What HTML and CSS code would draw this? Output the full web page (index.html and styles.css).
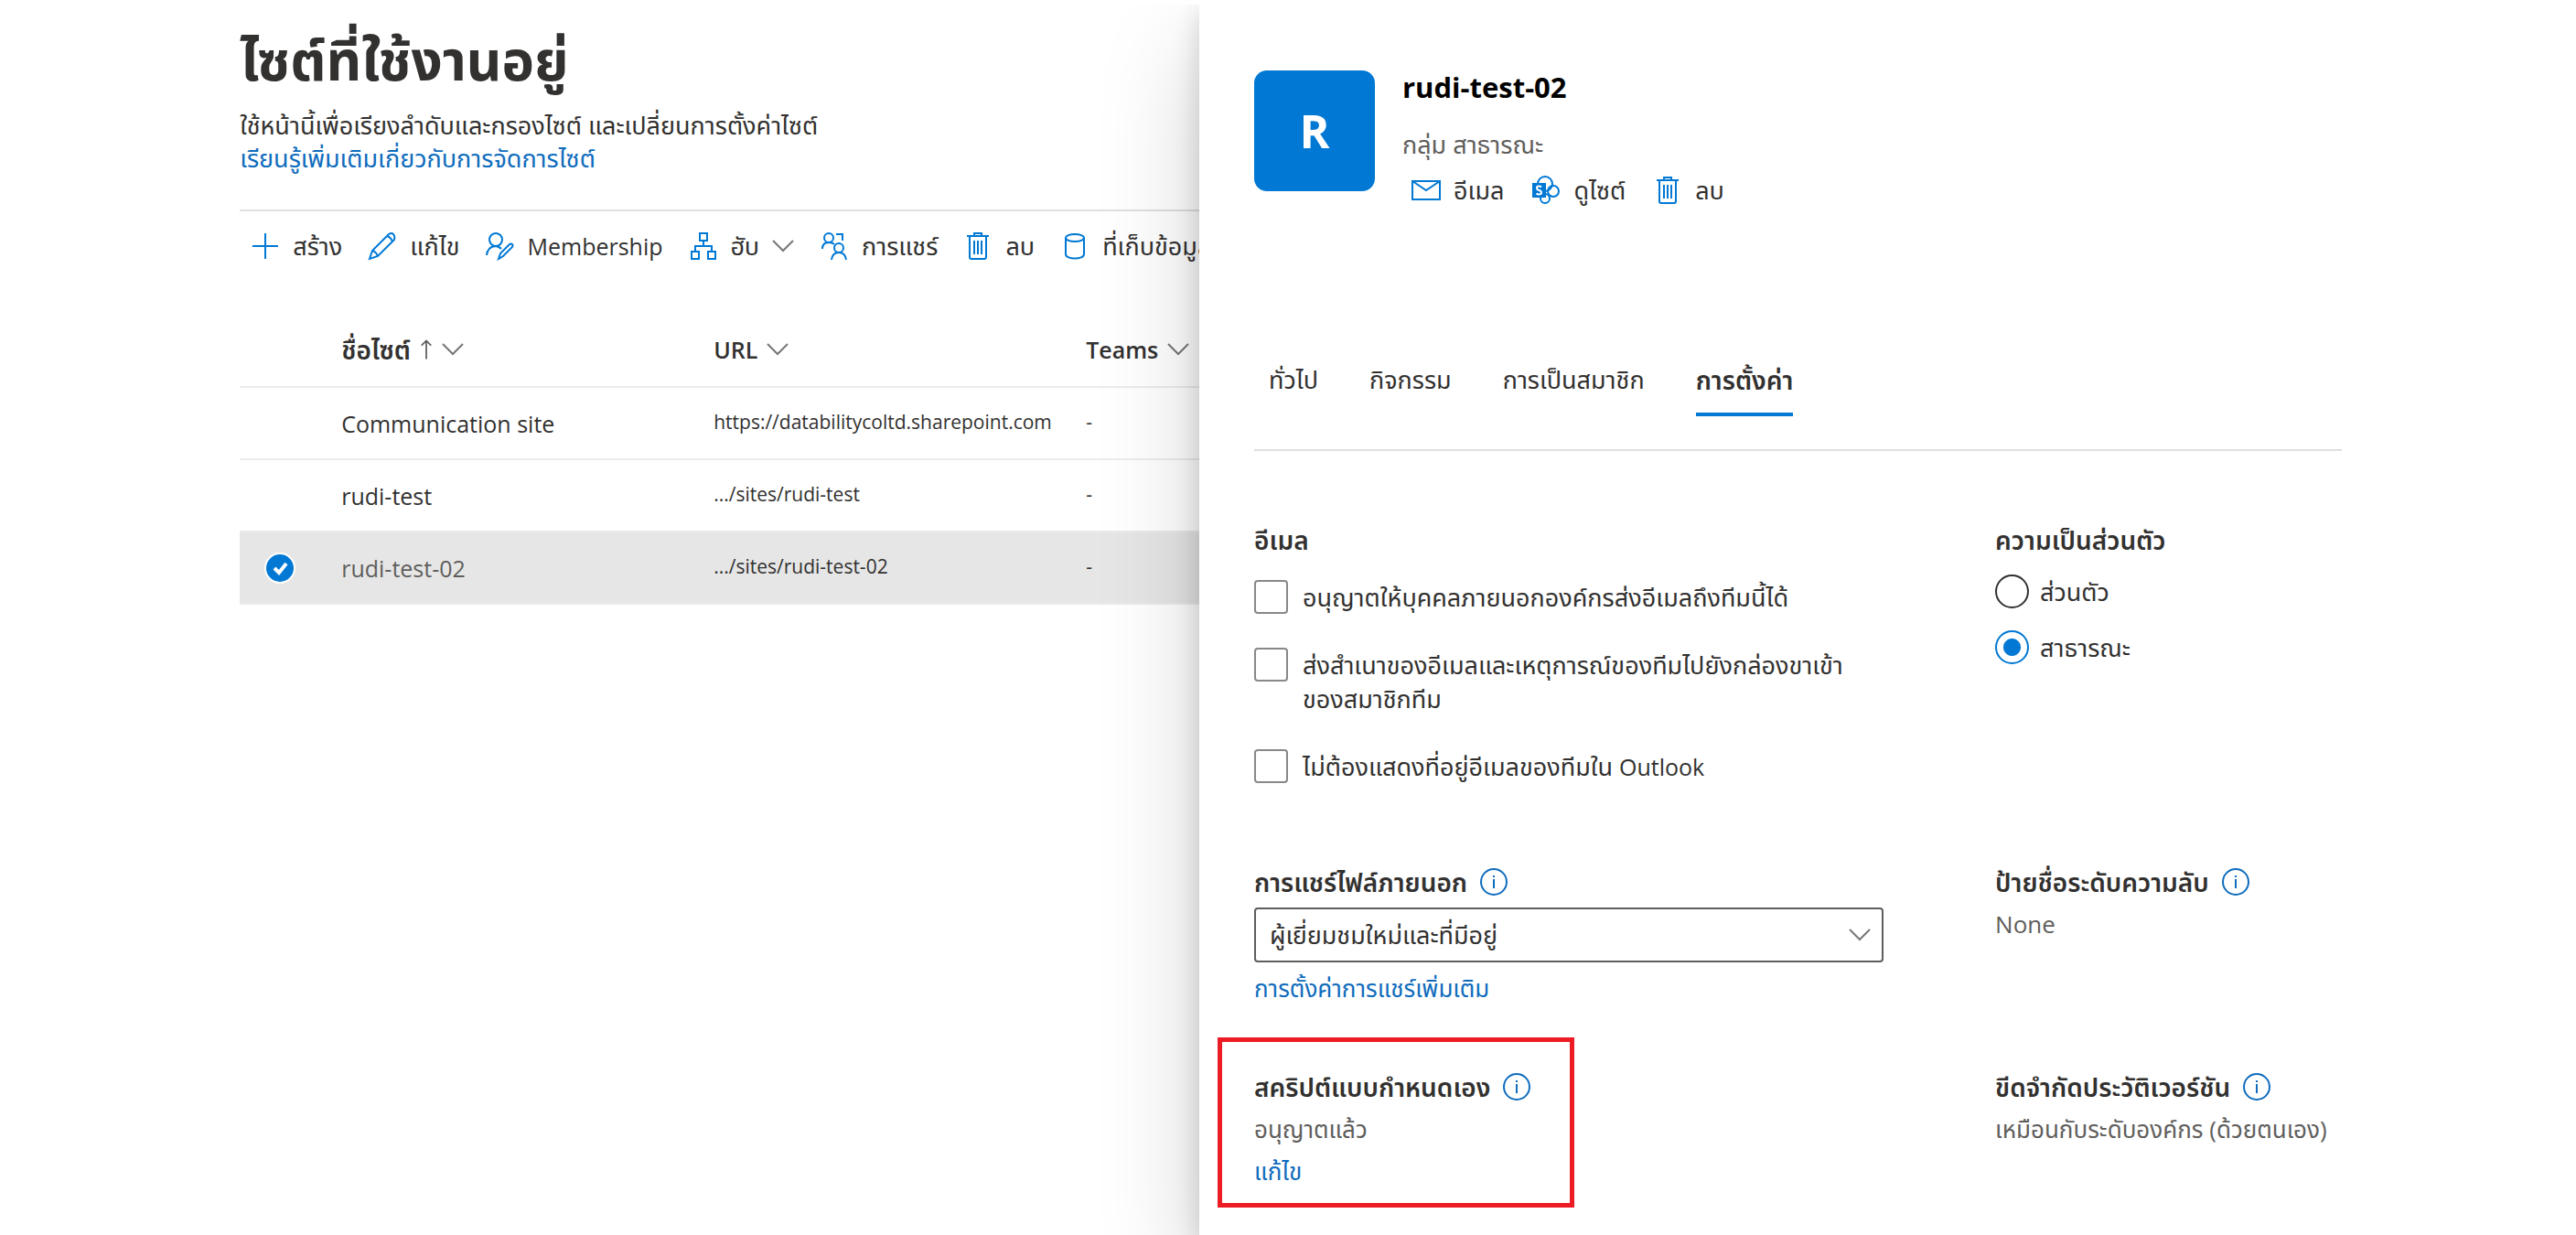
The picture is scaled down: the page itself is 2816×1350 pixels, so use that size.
FILE: index.html
```html
<!DOCTYPE html>
<html lang="th">
<head>
<meta charset="utf-8">
<meta name="viewport" content="width=device-width, initial-scale=1">
<title>ไซต์ที่ใช้งานอยู่</title>
<link rel="stylesheet" href="styles.css">
</head>
<body>
<svg class="defs" aria-hidden="true">
  <symbol id="i-chevron" viewBox="0 0 24 14"><path d="M1 1l11 11L23 1"/></symbol>
  <symbol id="i-trash" viewBox="0 0 26 32"><path d="M1 5h24M4 5v23q0 2 2 2h14q2 0 2-2V5M9 5V2h8v3M9 10v15M13 10v15M17 10v15"/></symbol>
  <symbol id="i-info" viewBox="0 0 30 30"><circle cx="15" cy="15" r="14"/><path d="M15 12v10M15 8v2"/></symbol>
</svg>
<div class="app">
  <main class="sites">
    <h1>ไซต์ที่ใช้งานอยู่</h1>
    <p class="intro">ใช้หน้านี้เพื่อเรียงลำดับและกรองไซต์ และเปลี่ยนการตั้งค่าไซต์<br><a href="#">เรียนรู้เพิ่มเติมเกี่ยวกับการจัดการไซต์</a></p>
    <div class="toolbar">
      <button type="button"><svg class="icon" viewBox="0 0 32 32"><path d="M16 2v28M2 16h28"/></svg>สร้าง</button>
      <button type="button"><svg class="icon" viewBox="0 0 32 32"><path d="M2 30l3-9L23 3q3-2 5 0t1 6L11 27l-9 3zM5 21q4 1 6 6M21 5q4 1 6 6"/></svg>แก้ไข</button>
      <button type="button" lang="en"><svg class="icon" viewBox="0 0 32 32"><circle cx="12" cy="9" r="7"/><path d="M2 26q1-9 9-10 4 0 7 3M15 30l2-6L27 14q2-1 3 0t0 3L20 27z"/></svg>Membership</button>
      <button type="button"><svg class="icon" viewBox="0 0 32 32"><path d="M12 2h8v8h-8zM3 22h8v8H3zM21 22h8v8h-8zM16 10v6M7 22v-6h18v6"/></svg>ฮับ<svg class="chevron"><use href="#i-chevron"/></svg></button>
      <button type="button"><svg class="icon" viewBox="0 0 32 32"><circle cx="10" cy="7" r="5"/><circle cx="21" cy="18" r="5"/><path d="M3 19q0-7 7-7 4 0 6 2M13 31q1-8 8-8t8 8M18 3h7v7"/></svg>การแชร์</button>
      <button type="button"><svg class="icon"><use href="#i-trash"/></svg>ลบ</button>
      <button type="button"><svg class="icon" viewBox="0 0 32 32"><ellipse cx="16" cy="7" rx="10" ry="4"/><path d="M6 7v18c0 6 20 6 20 0V7"/></svg>ที่เก็บข้อมูล</button>
    </div>
    <table>
      <thead>
        <tr>
          <th class="check"></th>
          <th><span class="sort">ชื่อไซต์ <svg class="arrow" viewBox="0 0 16 26"><path d="M8 25V2M2 8l6-6 6 6"/></svg><svg class="chevron"><use href="#i-chevron"/></svg></span></th>
          <th lang="en"><span class="sort">URL <svg class="chevron"><use href="#i-chevron"/></svg></span></th>
          <th lang="en"><span class="sort">Teams <svg class="chevron"><use href="#i-chevron"/></svg></span></th>
        </tr>
      </thead>
      <tbody>
        <tr><td></td><td class="name">Communication site</td><td>https://databilitycoltd.sharepoint.com</td><td>-</td></tr>
        <tr><td></td><td class="name">rudi-test</td><td>.../sites/rudi-test</td><td>-</td></tr>
        <tr class="selected"><td class="mark"><svg viewBox="0 0 34 34" role="img" aria-label="เลือกแล้ว"><circle class="halo" cx="17" cy="17" r="17"/><circle class="disc" cx="17" cy="17" r="15"/><path class="tick" d="M11 17l5 5 8-10"/></svg></td><td class="name">rudi-test-02</td><td>.../sites/rudi-test-02</td><td>-</td></tr>
      </tbody>
    </table>
  </main>

  <aside class="panel">
    <header class="group">
      <div class="avatar">R</div>
      <div class="about">
        <h2>rudi-test-02</h2>
        <p>กลุ่ม สาธารณะ</p>
        <div class="actions">
          <button type="button"><svg class="icon" viewBox="0 0 32 32"><path d="M1 6h30v20H1zM1 6l15 10L31 6"/></svg>อีเมล</button>
          <button type="button"><svg class="icon" viewBox="0 0 32 32"><circle cx="15" cy="9" r="8"/><circle cx="24" cy="17" r="6"/><circle cx="15" cy="25" r="5"/><path class="tile" d="M1 8h15v16H1z"/><path class="letter" d="M11 12.500q-1-1-3-1-2 0-2 2t2.500 2.500 2.500 2.500-2.500 2q-2 0-3-1"/></svg>ดูไซต์</button>
          <button type="button"><svg class="icon"><use href="#i-trash"/></svg>ลบ</button>
        </div>
      </div>
    </header>
    <nav class="tabs">
      <a href="#">ทั่วไป</a><a href="#">กิจกรรม</a><a href="#">การเป็นสมาชิก</a><a href="#" class="current" aria-current="page">การตั้งค่า</a>
    </nav>
    <form class="settings">
      <section class="mail">
        <h3>อีเมล</h3>
        <label><input type="checkbox"><span>อนุญาตให้บุคคลภายนอกองค์กรส่งอีเมลถึงทีมนี้ได้</span></label>
        <label><input type="checkbox"><span>ส่งสำเนาของอีเมลและเหตุการณ์ของทีมไปยังกล่องขาเข้า<br>ของสมาชิกทีม</span></label>
        <label><input type="checkbox"><span>ไม่ต้องแสดงที่อยู่อีเมลของทีมใน <span lang="en">Outlook</span></span></label>
      </section>
      <section class="privacy">
        <h3>ความเป็นส่วนตัว</h3>
        <label><input type="radio" name="privacy"><span>ส่วนตัว</span></label>
        <label><input type="radio" name="privacy" checked><span>สาธารณะ</span></label>
      </section>
      <section>
        <h3><label for="sharing">การแชร์ไฟล์ภายนอก</label><svg class="info"><use href="#i-info"/></svg></h3>
        <div class="select">
          <select id="sharing"><option>ผู้เยี่ยมชมใหม่และที่มีอยู่</option></select>
          <svg class="chevron"><use href="#i-chevron"/></svg>
        </div>
        <a href="#">การตั้งค่าการแชร์เพิ่มเติม</a>
      </section>
      <section>
        <h3>ป้ายชื่อระดับความลับ<svg class="info"><use href="#i-info"/></svg></h3>
        <p lang="en">None</p>
      </section>
      <section class="marked">
        <h3>สคริปต์แบบกำหนดเอง<svg class="info"><use href="#i-info"/></svg></h3>
        <p>อนุญาตแล้ว</p>
        <a href="#">แก้ไข</a>
      </section>
      <section>
        <h3>ขีดจำกัดประวัติเวอร์ชัน<svg class="info"><use href="#i-info"/></svg></h3>
        <p>เหมือนกับระดับองค์กร (ด้วยตนเอง)</p>
      </section>
    </form>
  </aside>
</div>
</body>
</html>
```
FILE: styles.css
```css
*, *::after { box-sizing: border-box; }
body, h1, h2, h3, p { margin: 0; }
body {
  background: #fff;
  color: #323130;
  font: 27px/36px "Open Sans", "Noto Sans Thai", "Noto Sans", sans-serif;
}
a { color: #0f6cbd; text-decoration: none; }
button, select { font: inherit; color: inherit; background: none; border: 0; padding: 0; }
svg { flex: none; fill: none; stroke: currentColor; stroke-width: 2; }
.defs { display: none; }
.icon { width: 32px; height: 32px; color: #0078d4; }
.chevron { width: 24px; height: 14px; color: #797775; }

.app {
  display: grid;
  grid-template-columns: 1311fr 1505fr;
  min-height: calc(100vh - 5px);
  margin-top: 5px;
  overflow: hidden;
}

/* Site list */
.sites { min-width: 0; padding: 24px 0 0 20%; overflow: hidden; }
h1 { font-size: 60px; line-height: 72px; font-weight: 700; }
.intro { padding: 18px 0 38px; border-bottom: 2px solid #e1dfdd; }
.toolbar { display: flex; gap: 28px; padding: 20px 12px; white-space: nowrap; }
.toolbar button { display: flex; align-items: center; gap: 14px; }
table { width: 100%; margin-top: 36px; border-collapse: collapse; table-layout: fixed; text-align: left; }
th, td { padding: 0; border-bottom: 2px solid #edebe9; white-space: nowrap; }
th { width: 407px; height: 80px; padding-bottom: 2px; font-weight: 600; font-size: 28px; }
th:last-child { width: auto; }
th.check { width: 111px; }
.sort { display: flex; align-items: center; gap: 10px; }
.arrow { width: 14px; height: 24px; color: #605e5c; }
td { height: 79px; padding-bottom: 4px; font-size: 21px; }
.name { font-size: 25px; padding-bottom: 0; }
.selected { background: #e6e6e6; }
.selected .name { color: #605e5c; }
.mark { padding: 0 0 0 27px; }
.mark svg { display: block; width: 34px; height: 34px; stroke: none; }
.halo { fill: #fff; }
.disc { fill: #0078d4; }
.mark .tick { stroke: #fff; stroke-width: 4; }

/* Details panel */
.panel {
  position: relative;
  padding: 72px 17% 0 60px;
  background: #fff;
  box-shadow: 0 46px 104px rgba(0, 0, 0, .18), 0 9px 26px rgba(0, 0, 0, .16);
}
.group { display: flex; gap: 30px; }
.avatar {
  display: grid;
  place-items: center;
  width: 132px;
  height: 132px;
  border-radius: 14px;
  background: #0078d4;
  color: #fff;
  font-size: 50px;
  font-weight: 700;
}
h2 { font-size: 31px; line-height: 36px; font-weight: 700; color: #000; }
.about p { margin-top: 27px; color: #605e5c; }
.actions { display: flex; gap: 30px; margin-top: 14px; padding-left: 10px; }
.actions button { display: flex; align-items: center; gap: 14px; }
.tile { fill: #0078d4; stroke: none; }
.letter { stroke: #fff; }
.tabs { display: flex; gap: 56px; margin-top: 167px; padding: 0 16px 36px; border-bottom: 2px solid #e1dfdd; }
.tabs a { color: inherit; padding: 4px 0 18px; border-bottom: 4px solid transparent; }
.tabs .current { border-color: #0078d4; font-weight: 600; font-size: 28px; }

.settings {
  display: grid;
  grid-template-columns: 688fr 379fr;
  gap: 72px 122px;
  padding-top: 79px;
}
.settings section { display: flex; flex-direction: column; align-items: flex-start; gap: 10px; }
h3 { display: flex; align-items: center; gap: 14px; font-size: 28px; line-height: 36px; font-weight: 600; }
.info { width: 30px; height: 30px; color: #0f6cbd; }
.settings p, .settings a { font-size: 26px; }
.settings p { color: #605e5c; }
.settings .mail { gap: 37px; padding-bottom: 17px; }
.mail h3 { margin-bottom: -11px; }
.settings .privacy { gap: 24px; }
.privacy h3 { margin-bottom: -4px; }
.mail label, .privacy label { display: flex; gap: 16px; line-height: 37px; }
.privacy label { gap: 12px; }
input { appearance: none; flex: none; width: 37px; height: 37px; margin: 0; border: 2px solid #8a8886; border-radius: 4px; background: #fff; }
input[type="radio"] { border-color: #323130; border-radius: 50%; }
input[type="radio"]:checked { border-color: #0078d4; background: radial-gradient(circle, #0078d4 9px, #fff 10px); }
.select { position: relative; align-self: stretch; }
select { appearance: none; width: 100%; height: 60px; padding: 0 60px 0 15px; border: 2px solid #605e5c; border-radius: 4px; }
.select .chevron { position: absolute; right: 14px; top: 23px; pointer-events: none; }
.marked { position: relative; }
.marked::after { content: ""; position: absolute; left: -40px; top: -36px; width: 390px; height: 186px; border: 5px solid #ed1c24; pointer-events: none; }

/* Latin text runs smaller than the Thai beside it */
:lang(en) { font-size: 25px; }
```
